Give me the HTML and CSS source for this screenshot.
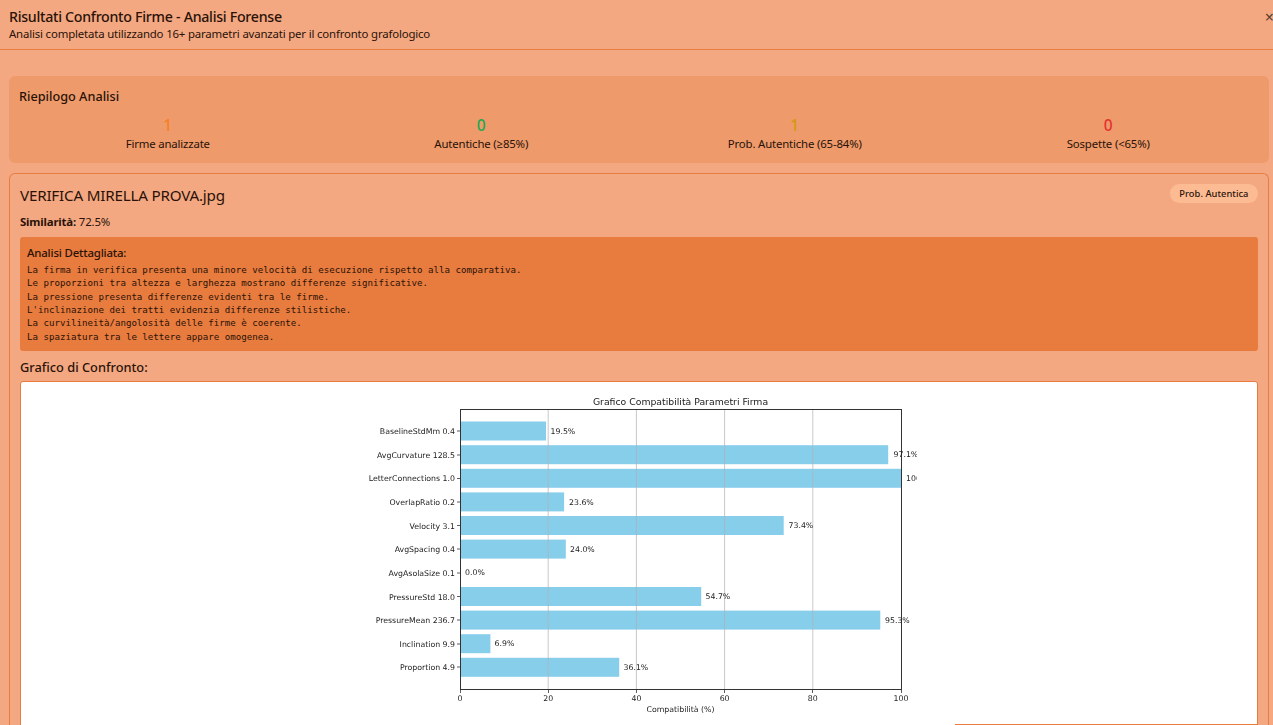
FILE: index.html
```html
<!DOCTYPE html>
<html lang="it">
<head>
<meta charset="utf-8">
<title>Risultati Confronto Firme</title>
<link rel="stylesheet" href="styles.css">
</head>
<body>
<div class="modal">
  <header class="modal-header">
    <div>
      <h1 class="modal-title">Risultati Confronto Firme - Analisi Forense</h1>
      <p class="modal-sub">Analisi completata utilizzando 16+ parametri avanzati per il confronto grafologico</p>
    </div>
    <span class="close">×</span>
  </header>
  <main class="modal-body">
    <section class="summary">
      <h2 class="summary-title">Riepilogo Analisi</h2>
      <div class="stats">
        <div class="stat"><div class="num c-orange">1</div><div class="lbl">Firme analizzate</div></div>
        <div class="stat"><div class="num c-green">0</div><div class="lbl">Autentiche (≥85%)</div></div>
        <div class="stat"><div class="num c-yellow">1</div><div class="lbl">Prob. Autentiche (65-84%)</div></div>
        <div class="stat"><div class="num c-red">0</div><div class="lbl">Sospette (&lt;65%)</div></div>
      </div>
    </section>
    <section class="card">
      <div class="card-head">
        <h3 class="file">VERIFICA MIRELLA PROVA.jpg</h3>
        <span class="badge">Prob. Autentica</span>
      </div>
      <p class="sim"><strong>Similarità:</strong> 72.5%</p>
      <div class="detail">
        <div class="detail-title">Analisi Dettagliata:</div>
        <pre class="detail-text">La firma in verifica presenta una minore velocità di esecuzione rispetto alla comparativa.
Le proporzioni tra altezza e larghezza mostrano differenze significative.
La pressione presenta differenze evidenti tra le firme.
L'inclinazione dei tratti evidenzia differenze stilistiche.
La curvilineità/angolosità delle firme è coerente.
La spaziatura tra le lettere appare omogenea.</pre>
      </div>
      <h4 class="chart-title">Grafico di Confronto:</h4>
      <div class="chart-box">
        <svg class="chart" width="556" height="360" viewBox="361 382 556 360" xmlns="http://www.w3.org/2000/svg">
          <g class="bars">
            <rect x="460" y="421.5" width="86" height="19"/>
            <rect x="460" y="445.2" width="428.2" height="19"/>
            <rect x="460" y="468.8" width="441" height="19"/>
            <rect x="460" y="492.4" width="104.1" height="19"/>
            <rect x="460" y="516" width="323.7" height="19"/>
            <rect x="460" y="539.6" width="105.8" height="19"/>
            <rect x="460" y="587" width="241.2" height="19"/>
            <rect x="460" y="610.6" width="420.3" height="19"/>
            <rect x="460" y="634.2" width="30.4" height="19"/>
            <rect x="460" y="657.8" width="159.2" height="19"/>
          </g>
          <g class="grid">
            <line x1="548.2" y1="409" x2="548.2" y2="689"/>
            <line x1="636.4" y1="409" x2="636.4" y2="689"/>
            <line x1="724.6" y1="409" x2="724.6" y2="689"/>
            <line x1="812.8" y1="409" x2="812.8" y2="689"/>
          </g>
          <rect class="axes" x="460.5" y="409.5" width="441" height="280"/>
          <g class="ticks">
            <line x1="457" y1="431" x2="460" y2="431"/><line x1="457" y1="455" x2="460" y2="455"/>
            <line x1="457" y1="478.500" x2="460" y2="478.500"/><line x1="457" y1="502" x2="460" y2="502"/>
            <line x1="457" y1="525.500" x2="460" y2="525.500"/><line x1="457" y1="549" x2="460" y2="549"/>
            <line x1="457" y1="573" x2="460" y2="573"/><line x1="457" y1="596.500" x2="460" y2="596.500"/>
            <line x1="457" y1="620" x2="460" y2="620"/><line x1="457" y1="644" x2="460" y2="644"/>
            <line x1="457" y1="667" x2="460" y2="667"/>
            <line x1="460.500" y1="690" x2="460.500" y2="693"/><line x1="548.500" y1="690" x2="548.500" y2="693"/>
            <line x1="636.500" y1="690" x2="636.500" y2="693"/><line x1="724.500" y1="690" x2="724.500" y2="693"/>
            <line x1="812.500" y1="690" x2="812.500" y2="693"/><line x1="901.500" y1="690" x2="901.500" y2="693"/>
          </g>
          <text class="t-title" x="680.500" y="404.500">Grafico Compatibilità Parametri Firma</text>
          <g class="t-y">
            <text x="455" y="434">BaselineStdMm 0.4</text>
            <text x="455" y="457.500">AvgCurvature 128.5</text>
            <text x="455" y="481">LetterConnections 1.0</text>
            <text x="455" y="504.500">OverlapRatio 0.2</text>
            <text x="455" y="528.500">Velocity 3.1</text>
            <text x="455" y="552">AvgSpacing 0.4</text>
            <text x="455" y="575.500">AvgAsolaSize 0.1</text>
            <text x="455" y="599.500">PressureStd 18.0</text>
            <text x="455" y="622.500">PressureMean 236.7</text>
            <text x="455" y="646.500">Inclination 9.9</text>
            <text x="455" y="670">Proportion 4.9</text>
          </g>
          <g class="t-v">
            <text x="550.500" y="433.500">19.5%</text>
            <text x="893.500" y="457">97.1%</text>
            <text x="906" y="481">100.0%</text>
            <text x="569" y="504.500">23.6%</text>
            <text x="788.500" y="528">73.4%</text>
            <text x="570" y="551.500">24.0%</text>
            <text x="465" y="575">0.0%</text>
            <text x="705.500" y="599">54.7%</text>
            <text x="885" y="622.500">95.3%</text>
            <text x="494.500" y="646">6.9%</text>
            <text x="623.500" y="669.500">36.1%</text>
          </g>
          <g class="t-x">
            <text x="460" y="701">0</text><text x="548.200" y="701">20</text>
            <text x="636.400" y="701">40</text><text x="724.600" y="701">60</text>
            <text x="812.800" y="701">80</text><text x="901" y="701">100</text>
            <text x="680.500" y="712">Compatibilità (%)</text>
          </g>
        </svg>
      </div>
    </section>
  </main>
  <div class="footer-edge"></div>
</div>
</body>
</html>
```
FILE: styles.css
```css
* { box-sizing: border-box; }
html, body { margin: 0; height: 725px; overflow: hidden; }
body {
  background: #f4a882;
  color: #2a1208;
  font-family: "Noto Sans", "Open Sans", sans-serif;
}
.modal { height: 725px; overflow: hidden; }
.modal-header {
  height: 50px;
  display: flex;
  justify-content: space-between;
  align-items: flex-start;
  padding: 8px 0 0 9px;
  border-bottom: 1px solid #e87d42;
}
.modal-title { margin: -1px 0 1px; font-size: 14.2px; line-height: 19px; font-weight: 500; letter-spacing: -0.28px; }
.modal-sub { margin: 0; font-size: 11.4px; line-height: 14px; letter-spacing: -0.165px; }
.close { font-size: 16px; line-height: 16px; color: #5a4030; margin: 1px -1px 0 0; }
.modal-body { padding: 26px 4px 0 9px; }
.summary {
  background: #ee9a6b;
  border-radius: 6px;
  height: 87px;
  padding: 12px 12px 0 10px;
  margin-bottom: 10px;
}
.summary-title { margin: 0 0 9px; font-size: 12.7px; line-height: 17px; font-weight: 500; }
.stats { display: grid; grid-template-columns: repeat(4, 1fr); gap: 16px; }
.stat { text-align: center; }
.num { font-size: 15.5px; line-height: 20px; font-weight: 500; margin-top: 1px; margin-bottom: -1px; }
.lbl { font-size: 11.4px; line-height: 20px; letter-spacing: -0.17px; }
.c-orange { color: #f5821f; }
.c-green { color: #22a94f; }
.c-yellow { color: #d19a0a; }
.c-red { color: #e5332f; }
.card {
  border: 1px solid #e87d42;
  border-bottom: 0;
  border-radius: 6px 6px 0 0;
  padding: 10px 10px 0 10px;
  height: 560px;
}
.card-head { display: flex; justify-content: space-between; align-items: flex-start; height: 28px; }
.file { margin: 1px 0 0; font-size: 15.2px; line-height: 21px; font-weight: 400; letter-spacing: -0.2px; }
.badge {
  background: #fdbb94;
  border-radius: 10px;
  font-size: 9.3px;
  line-height: 19px;
  height: 19px;
  padding: 0 9.5px;
  font-weight: 500;
  letter-spacing: 0.05px;
}
.sim { margin: 0 0 5px; font-size: 11.4px; line-height: 20px; letter-spacing: -0.17px; }
.sim strong { font-weight: 700; }
.detail {
  background: #e87b3e;
  border-radius: 3px;
  height: 114px;
  padding: 8px 7px 0;
  margin-bottom: 8px;
}
.detail-title { font-size: 11.4px; line-height: 15px; font-weight: 500; margin-bottom: 4px; letter-spacing: -0.17px; }
.detail-text {
  margin: 0;
  font-family: "DejaVu Sans Mono", "Liberation Mono", monospace;
  font-size: 9.13px;
  line-height: 13.35px;
  white-space: pre;
}
.chart-title { margin: 0 0 5px; font-size: 12.8px; line-height: 17px; font-weight: 500; }
.chart-box {
  background: #fff;
  border: 1px solid #e87b3e;
  border-radius: 3px;
  height: 400px;
  display: flex;
  justify-content: center;
  align-items: flex-start;
}
.chart { display: block; flex: none; filter: blur(0.3px); }
.bars rect { fill: #87ceeb; }
.grid line { stroke: #b0b0b0; stroke-opacity: 0.7; stroke-width: 1; }
.axes { fill: none; stroke: #333; stroke-width: 1; }
.ticks line { stroke: #333; stroke-width: 0.8; }
.chart text { font-family: "DejaVu Sans", sans-serif; fill: #222; }
.t-title { font-size: 9.3px; text-anchor: middle; }
.t-y text { font-size: 7.8px; text-anchor: end; }
.t-v text { font-size: 7.8px; }
.t-x text { font-size: 7.8px; text-anchor: middle; }
.footer-edge {
  position: fixed;
  left: 955px;
  width: 303px;
  top: 724px;
  height: 1px;
  background: #e87b3e;
}
```
